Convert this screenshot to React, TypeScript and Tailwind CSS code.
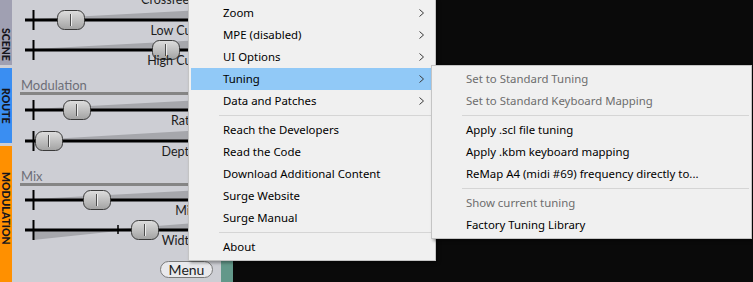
import React from 'react';

interface SliderProps {
  id: string;
  handle: number;
  label: string;
  wedgeFrom?: number;
  wedgeTop: number;
  lowerTo?: number;
  midTick?: number;
}

const Slider: React.FC<SliderProps> = ({ id, handle, label, wedgeFrom = 21, wedgeTop, lowerTo, midTick }) => (
  <div className="relative h-[30px]">
    <svg width="209" height="30" className="block">
      <defs>
        <linearGradient id={id} x1="0" y1="0" x2="0" y2="1">
          <stop offset="0" stopColor="#dedede" />
          <stop offset="1" stopColor="#a2a2a2" />
        </linearGradient>
      </defs>
      <polygon points={`${wedgeFrom},9 209,${wedgeTop} 209,10 ${wedgeFrom},10`} fill="#a6a7ac" />
      {lowerTo && <polygon points={`21,11 21,20 ${lowerTo},11`} fill="#a6a7ac" />}
      <line x1="13" y1="10" x2="209" y2="10" stroke="#000" strokeWidth="3" />
      <line x1="21.5" y1="0" x2="21.5" y2="20" stroke="#000" strokeWidth="2" />
      {midTick && <line x1={midTick} y1="5" x2={midTick} y2="14" stroke="#000" strokeWidth="1.5" />}
      <g transform={`translate(${handle},0)`}>
        <rect x="0.5" y="0.5" width="27" height="19" rx="7" fill={`url(#${id})`} stroke="#3a3a3a" />
        <line x1="13.5" y1="4" x2="13.5" y2="16" stroke="#4d4d4d" />
        <line x1="14.5" y1="4" x2="14.5" y2="16" stroke="#ededed" />
      </g>
    </svg>
    <span className="absolute right-[25px] top-[15px] whitespace-nowrap text-[12.5px] leading-[12px] text-[#1c1c1c]">
      {label}
    </span>
  </div>
);

const Header: React.FC<{ title: string; h: string }> = ({ title, h }) => (
  <div className={`${h} pt-[9px] pl-[8px]`}>
    <div className="pl-[1px] text-[13px] leading-[13px] text-[#6e6e78]">{title}</div>
    <div className="h-[3px] bg-[#858585]" />
  </div>
);

const Chevron = () => (
  <svg width="5" height="8" className="mr-[9px] block">
    <polyline points="0.5,0.5 4.5,4 0.5,7.5" fill="none" stroke="#3a3a3a" strokeWidth="1" />
  </svg>
);

type Item = { label?: string; sub?: boolean; active?: boolean; disabled?: boolean; sep?: boolean };

const mainItems: Item[] = [
  { label: 'Zoom', sub: true },
  { label: 'MPE (disabled)', sub: true },
  { label: 'UI Options', sub: true },
  { label: 'Tuning', sub: true, active: true },
  { label: 'Data and Patches', sub: true },
  { sep: true },
  { label: 'Reach the Developers' },
  { label: 'Read the Code' },
  { label: 'Download Additional Content' },
  { label: 'Surge Website' },
  { label: 'Surge Manual' },
  { sep: true },
  { label: 'About' },
];

const tuningItems: Item[] = [
  { label: 'Set to Standard Tuning', disabled: true },
  { label: 'Set to Standard Keyboard Mapping', disabled: true },
  { sep: true },
  { label: 'Apply .scl file tuning' },
  { label: 'Apply .kbm keyboard mapping' },
  { label: 'ReMap A4 (midi #69) frequency directly to...' },
  { sep: true },
  { label: 'Show current tuning', disabled: true },
  { label: 'Factory Tuning Library' },
];

const Menu: React.FC<{ items: Item[]; className: string }> = ({ items, className }) => (
  <div
    className={`absolute border border-[#c4c4c4] bg-[#f0f0f0] p-[2px] font-['Noto_Sans',sans-serif] text-[11.4px] shadow-[2px_2px_3px_rgba(0,0,0,0.35)] ${className}`}
  >
    {items.map((it, i) =>
      it.sep ? (
        <div key={i} className="flex h-[7px] items-center pl-[28px]">
          <div className="h-px flex-1 bg-[#d5d5d5]" />
        </div>
      ) : (
        <div
          key={i}
          className={`flex h-[22px] items-center pl-[32px] ${it.active ? 'bg-[#91c9f7]' : ''} ${
            it.disabled ? 'text-[#6d6d6d]' : 'text-black'
          }`}
        >
          <span className="flex-1 whitespace-nowrap">{it.label}</span>
          {it.sub && <Chevron />}
        </div>
      )
    )}
  </div>
);

const SideTabs = () => (
  <div className="flex w-[12px] flex-col gap-[3px] bg-[#cdced4] font-['Lato',sans-serif] text-[10.5px] font-black leading-[12px] text-[#15151c]">
    <div className="h-[65px] bg-[#a0a0b2] pt-[28px] [writing-mode:vertical-rl]">SCENE</div>
    <div className="h-[75px] bg-[#3a8ef2] pt-[20px] [writing-mode:vertical-rl]">ROUTE</div>
    <div className="flex-1 bg-[#ff9000] pt-[26px] [writing-mode:vertical-rl]">MODULATION</div>
  </div>
);

const Panel = () => (
  <div className="flex w-[209px] flex-col bg-[#cdced4] font-['Lato',sans-serif]">
    <div className="relative h-[10px]">
      <span className="absolute right-[25px] top-[-6px] whitespace-nowrap text-[12.5px] leading-[12px] text-[#1c1c1c]">
        Crossfeed
      </span>
    </div>
    <Slider id="h1" handle={45} label="Low Cut" wedgeTop={-1} />
    <Slider id="h2" handle={140} label="High Cut" wedgeTop={-1} />
    <Header title="Modulation" h="h-[30px]" />
    <div className="h-[31px]">
      <Slider id="h3" handle={51} label="Rate" wedgeTop={-1} />
    </div>
    <Slider id="h4" handle={23} label="Depth" wedgeTop={-2} />
    <Header title="Mix" h="h-[29px]" />
    <Slider id="h5" handle={71} label="Mix" wedgeTop={-1} />
    <Slider id="h6" handle={119} label="Width" wedgeFrom={106} wedgeTop={1} lowerTo={106} midTick={106} />
    <div className="flex justify-end pr-[8px] pt-[11px]">
      <div className="flex h-[17px] w-[53px] items-center justify-center rounded-full border border-[#7a7a7a] bg-[#e9e9ec] text-[14px] leading-none text-[#1c1c1c]">
        Menu
      </div>
    </div>
  </div>
);

export default function App() {
  return (
    <div className="relative flex h-[282px] w-[753px] overflow-hidden bg-[#0a0a0a]">
      <SideTabs />
      <Panel />
      <div className="w-[12px] bg-[#63988a]" />
      <Menu items={mainItems} className="left-[188px] top-[-1px] w-[248px]" />
      <Menu items={tuningItems} className="left-[431px] top-[65px] w-[321px]" />
    </div>
  );
}
